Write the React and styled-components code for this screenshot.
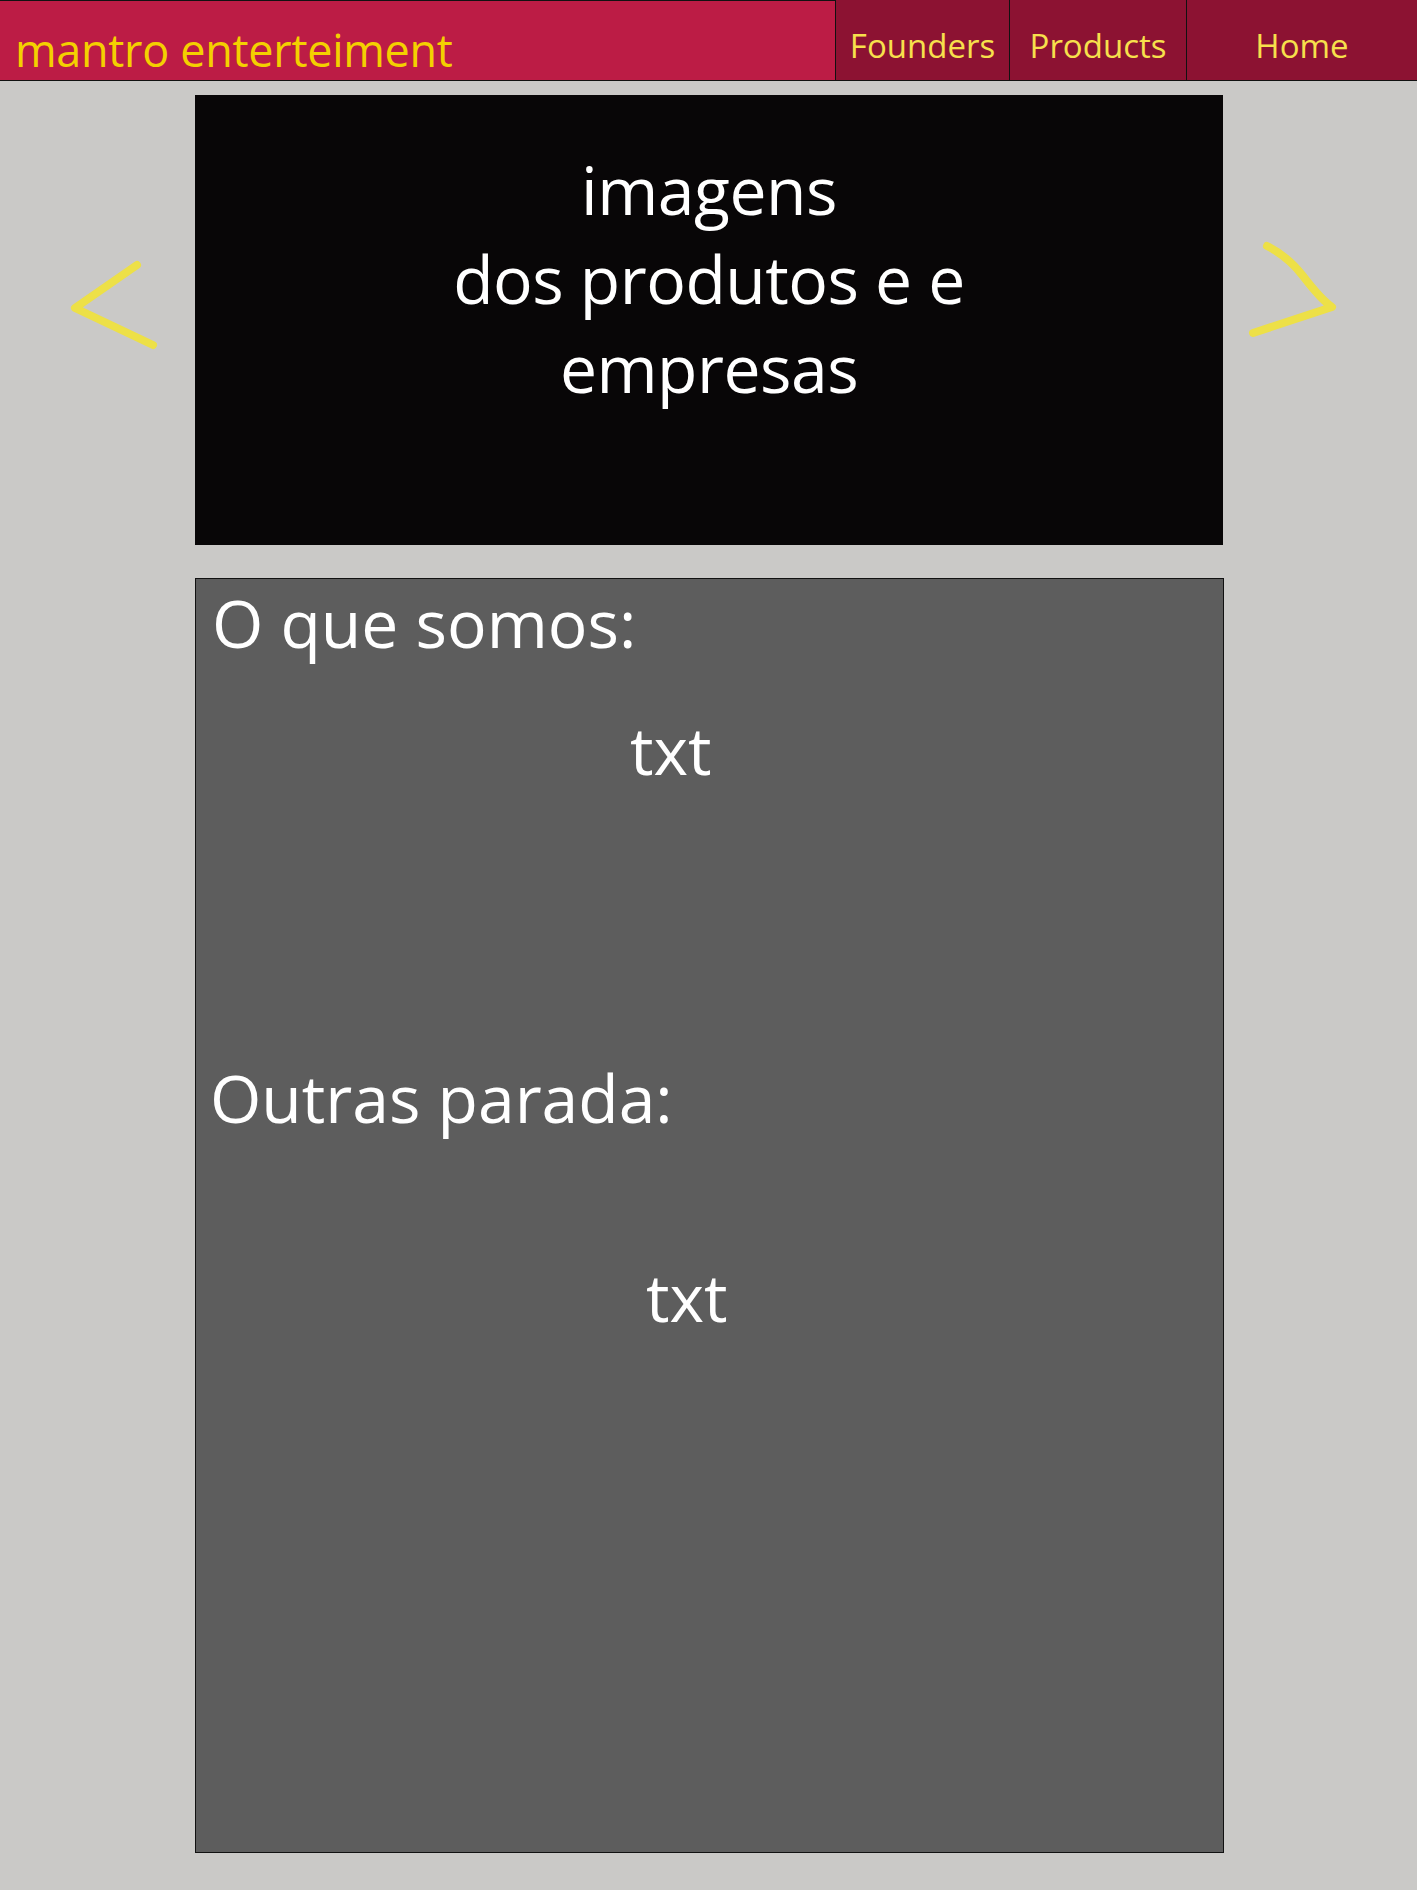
import React from "react";
import styled, { createGlobalStyle } from "styled-components";

const GlobalStyle = createGlobalStyle`
  body {
    margin: 0;
    background: #cac9c7;
    font-family: "Open Sans", "Noto Sans", sans-serif;
  }
`;

const Page = styled.div`
  width: 1417px;
  min-height: 1890px;
  background: #cac9c7;
`;

const Header = styled.header`
  display: flex;
  height: 81px;
`;

const Brand = styled.div`
  flex: 1;
  background: #bc1c45;
  border-top: 1px solid #111;
  border-bottom: 1px solid #111;
  box-sizing: border-box;
  padding: 26px 0 0 15px;
  font-size: 45px;
  line-height: 1;
  color: #f4d000;
  letter-spacing: -0.3px;
`;

const Nav = styled.nav`
  display: flex;
  width: 582px;
  background: #8c1232;
  border-left: 1px solid #111;
  border-bottom: 1px solid #111;
  box-sizing: border-box;
`;

const NavItem = styled.a`
  width: ${(p) => p.$w}px;
  box-sizing: border-box;
  border-right: ${(p) => (p.$last ? "none" : "1px solid #111")};
  padding-top: 29px;
  text-align: center;
  font-size: 33px;
  line-height: 1;
  color: #f7e04c;
  text-decoration: none;
`;

const Slider = styled.section`
  display: grid;
  grid-template-columns: 195px 1028px 1fr;
  margin-top: 14px;
  height: 450px;
`;

const Arrow = styled.svg`
  display: block;
  width: 100%;
  height: 100%;
`;

const Banner = styled.div`
  background: #080607;
  color: #fff;
  text-align: center;
  padding-top: 50px;
  font-size: 66px;
  line-height: 89px;
  letter-spacing: -0.5px;
`;

const Info = styled.section`
  margin: 33px 0 0 195px;
  width: 1029px;
  height: 1275px;
  box-sizing: border-box;
  background: #5d5d5d;
  border: 1px solid #111;
  padding-top: 10px;
  color: #fff;
  font-size: 66px;
  line-height: 1;
`;

const Heading = styled.h2`
  margin: ${(p) => p.$top}px 0 0 ${(p) => p.$left}px;
  font-size: inherit;
  font-weight: 400;
`;

const Body = styled.p`
  margin: ${(p) => p.$top}px 0 0 ${(p) => p.$left}px;
`;

const arrowStroke = {
  fill: "none",
  stroke: "#ede047",
  strokeWidth: 8,
  strokeLinecap: "round",
  strokeLinejoin: "round",
};

const App = () => {
  return (
    <Page>
      <GlobalStyle />
      <Header>
        <Brand>mantro enterteiment</Brand>
        <Nav>
          <NavItem $w={174}>Founders</NavItem>
          <NavItem $w={177}>Products</NavItem>
          <NavItem $w={230} $last>
            Home
          </NavItem>
        </Nav>
      </Header>

      <Slider>
        <Arrow viewBox="0 0 195 450">
          <path d="M137 170 L75 213 L153 250" {...arrowStroke} />
        </Arrow>
        <Banner>
          imagens
          <br />
          dos produtos e e
          <br />
          empresas
        </Banner>
        <Arrow viewBox="0 0 194 450">
          <path d="M44 151 C58 158 70 168 80 181 S100 206 109 212 L30 238" {...arrowStroke} />
        </Arrow>
      </Slider>

      <Info>
        <Heading $top={0} $left={16}>
          O que somos:
        </Heading>
        <Body $top={61} $left={434}>
          txt
        </Body>
        <Heading $top={282} $left={14}>
          Outras parada:
        </Heading>
        <Body $top={133} $left={450}>
          txt
        </Body>
      </Info>
    </Page>
  );
};

export default App;
